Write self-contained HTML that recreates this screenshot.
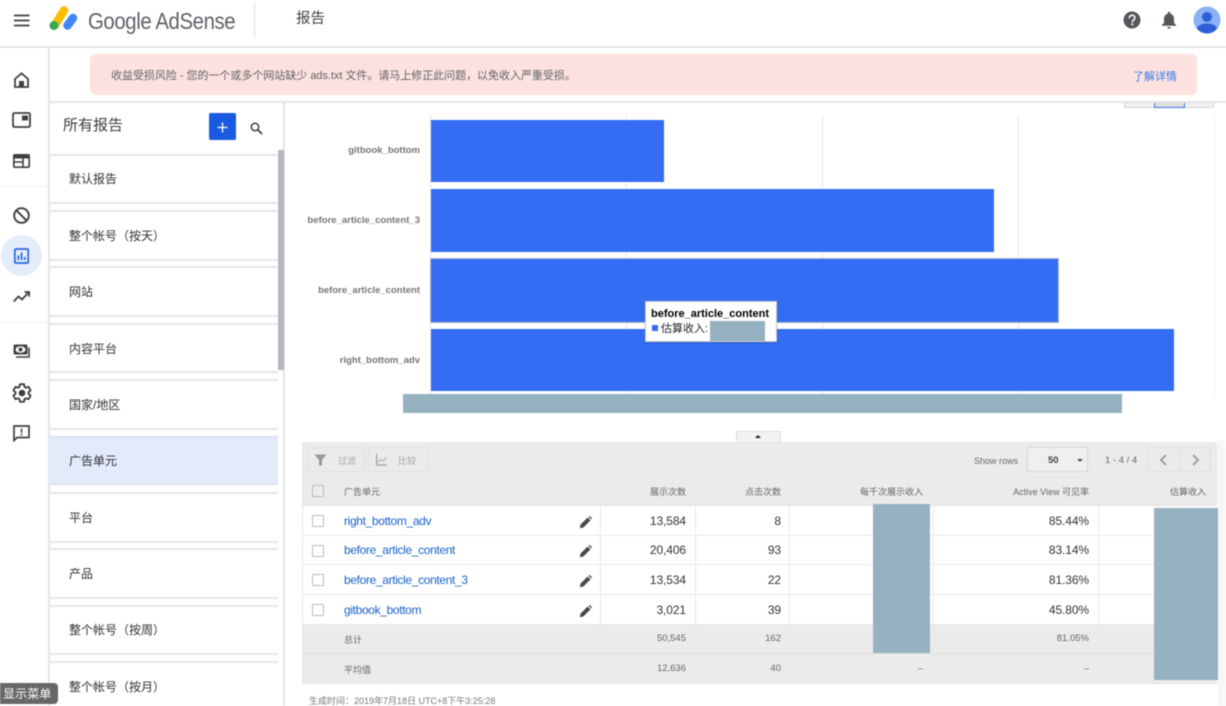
<!DOCTYPE html>
<html><head><meta charset="utf-8"><style>
*{box-sizing:border-box}
html,body{margin:0;padding:0;width:1226px;height:706px;overflow:hidden;background:#fff}
body{font-family:"Liberation Sans","Noto Sans CJK SC",sans-serif;color:#3c4043;position:relative}
#r{position:absolute;left:0;top:0;width:1226px;height:706px;overflow:hidden;filter:blur(.4px)}
#r div,#r svg,#r a{position:absolute}
.t{white-space:nowrap;line-height:20px}
.hl{background:#e3e4e8;height:2px}
.vl{background:#e3e4e8;width:2px}
.side{left:69px;font-size:12px;color:#303235;letter-spacing:0}
.ln{left:49px;width:229px;height:2px;background:#e4e5e9}
.bar{left:431px;background:#346df3}
.gl{width:1px;top:115px;height:280px;background:#e6e6e6}
.mask{background:#96b1bf}
.row{left:303px;width:914px;height:1px;background:#e8e8e8}
.cd{width:1px;top:476px;height:208px;background:#e8e8e8}
.th{font-size:9px;color:#666;top:482px;text-align:right}
.n{font-size:12px;color:#333;text-align:right;letter-spacing:-.1px}
.s{font-size:9.5px;color:#666;text-align:right}
.lnk{left:344px;font-size:12px;color:#1a62c9;letter-spacing:-.35px}
.cb{left:312px;width:12px;height:12px;border:1px solid #bbb;background:#fff;border-radius:1px}
.pen{left:579px;width:13px;height:13px}
.lab{right:806px;font-size:9.5px;font-weight:bold;color:#757575}
.tb{top:451px;font-size:9px}
</style></head><body><div id="r">

<!-- header -->
<div class="hl" style="left:0;top:46px;width:1226px;height:2px;background:#e6e6e8"></div>
<svg style="left:14px;top:14px" width="16" height="13" viewBox="0 0 16 13"><path d="M0 1.5h15.5M0 6.500h15.5M0 11.500h15.5" stroke="#3c4043" stroke-width="1.800" fill="none"/></svg>
<svg style="left:49px;top:5px" width="30" height="26" viewBox="0 0 30 26">
<path d="M6 20 L15 5.500" stroke="#fbbc04" stroke-width="8.500" stroke-linecap="round" fill="none"/>
<path d="M18.500 20.500 L24 13" stroke="#4285f4" stroke-width="8.500" stroke-linecap="round" fill="none"/>
<circle cx="5" cy="20.500" r="4.500" fill="#34a853"/>
</svg>
<div class="t" style="left:88px;top:8px;font-size:23px;line-height:26px;color:#5f6368;letter-spacing:-.45px;transform:scaleX(.885);transform-origin:left center">Google AdSense</div>
<div style="left:254px;top:3px;width:1px;height:34px;background:#dadce0"></div>
<div class="t" style="left:296px;top:9px;font-size:14.500px;color:#3c4043">报告</div>
<svg style="left:1123px;top:11px" width="18" height="18" viewBox="0 0 18 18"><circle cx="9" cy="9" r="8.500" fill="#54575b"/><path d="M6.200 7.200C6.200 5.400 7.500 4.300 9.100 4.300c1.600 0 2.800 1 2.800 2.500 0 2-2.600 2.300-2.600 4.400" fill="none" stroke="#fff" stroke-width="1.600"/><rect x="8.300" y="12.400" width="1.900" height="1.900" fill="#fff"/></svg>
<svg style="left:1161px;top:11px" width="16" height="18" viewBox="0 0 16 18"><path d="M8 .8c.8 0 1.300.6 1.300 1.400v.5c2.400.6 3.700 2.600 3.700 5.100v4.200l2 1.800v.9H1v-.9l2-1.800V7.800c0-2.500 1.300-4.500 3.700-5.100v-.5C6.700 1.400 7.200.8 8 .8z" fill="#54575b"/><path d="M6.300 16h3.400c0 1-.8 1.700-1.700 1.700S6.300 17 6.300 16z" fill="#54575b"/></svg>
<svg style="left:1193px;top:6px" width="28" height="28" viewBox="0 0 28 28"><circle cx="14" cy="14" r="13.500" fill="#8ab0f6"/><circle cx="14" cy="11" r="5" fill="#2f5fd6"/><path d="M3.800 22.500C5.500 18.800 9.500 17.500 14 17.500s8.500 1.300 10.200 5C21.700 25.700 18 27.500 14 27.500S6.300 25.700 3.800 22.500z" fill="#2f5fd6"/></svg>

<!-- left rail -->
<div class="vl" style="left:48px;top:48px;height:658px;background:#e4e5ea"></div>
<svg style="left:14px;top:72px" width="15" height="16" viewBox="0 0 15 16"><path d="M1 7 7.500 1.300 14 7v8H1z" fill="none" stroke="#3c4043" stroke-width="1.800"/><rect x="5" y="9" width="5" height="6" fill="#3c4043"/></svg>
<svg style="left:12px;top:112px" width="19" height="16" viewBox="0 0 19 16"><rect x="1" y="1" width="17" height="14" rx="1.500" fill="none" stroke="#3c4043" stroke-width="1.800"/><rect x="10" y="3.500" width="6" height="5" fill="#3c4043"/></svg>
<svg style="left:13px;top:154px" width="17" height="14" viewBox="0 0 17 14"><rect x=".8" y=".8" width="15.400" height="12.400" rx="1" fill="none" stroke="#3c4043" stroke-width="1.700"/><rect x="1" y="1" width="15" height="3.500" fill="#3c4043"/><path d="M1 8h9M10 4v9" stroke="#3c4043" stroke-width="1.600"/></svg>
<div style="left:0;top:186px;width:48px;height:1px;background:#eeeef0"></div>
<svg style="left:13px;top:207px" width="17" height="17" viewBox="0 0 17 17"><circle cx="8.500" cy="8.500" r="7.300" fill="none" stroke="#3c4043" stroke-width="1.900"/><path d="M3.300 3.300l10.400 10.400" stroke="#3c4043" stroke-width="1.900"/></svg>
<div style="left:1px;top:235px;width:41px;height:41px;border-radius:50%;background:#e3ecfb"></div>
<svg style="left:14px;top:248px" width="15" height="16" viewBox="0 0 15 16"><rect x=".8" y="1" width="13.400" height="14" rx="1" fill="none" stroke="#2a63e0" stroke-width="1.700"/><path d="M4.300 12V7.500M7.500 12V4.500M10.700 12V9" stroke="#2a63e0" stroke-width="1.700"/></svg>
<svg style="left:13px;top:291px" width="17" height="12" viewBox="0 0 17 12"><path d="M.7 10.500 5.500 5.500 9 8.500 15.500 1.500M11.500 1h4.700v4.700" fill="none" stroke="#3c4043" stroke-width="1.800"/></svg>
<div style="left:0;top:322px;width:48px;height:1px;background:#eeeef0"></div>
<svg style="left:13px;top:344px" width="17" height="14" viewBox="0 0 17 14"><rect x=".5" y=".5" width="14" height="10" rx="1.500" fill="#3c4043"/><ellipse cx="7.500" cy="5.500" rx="5" ry="3.300" fill="#fff"/><circle cx="7.500" cy="5.500" r="2" fill="#3c4043"/><path d="M16 3.500v9.500H3" fill="none" stroke="#3c4043" stroke-width="1.600"/></svg>
<svg style="left:10.500px;top:381.500px" width="22" height="22" viewBox="0 0 24 24"><path d="M19.140 12.940c.04-.3.06-.61.06-.94 0-.32-.02-.64-.07-.94l2.030-1.580c.18-.14.23-.41.12-.61l-1.920-3.320c-.12-.22-.37-.29-.59-.22l-2.390.96c-.5-.38-1.030-.7-1.620-.94l-.36-2.540c-.04-.24-.24-.41-.48-.41h-3.840c-.24 0-.43.17-.47.41l-.36 2.540c-.59.24-1.130.57-1.620.94l-2.390-.96c-.22-.08-.47 0-.59.22L2.740 8.870c-.12.21-.08.47.12.61l2.030 1.580c-.05.3-.09.63-.09.94s.02.64.07.94l-2.030 1.580c-.18.14-.23.41-.12.61l1.920 3.320c.12.22.37.29.59.22l2.390-.96c.5.38 1.030.7 1.620.94l.36 2.540c.05.24.24.41.48.41h3.840c.24 0 .44-.17.47-.41l.36-2.540c.59-.24 1.130-.56 1.620-.94l2.390.96c.22.08.47 0 .59-.22l1.920-3.320c.12-.22.07-.47-.12-.61l-2.010-1.580z" fill="none" stroke="#3c4043" stroke-width="2"/><circle cx="12" cy="12" r="3.600" fill="#3c4043"/></svg>
<svg style="left:13px;top:425px" width="17" height="17" viewBox="0 0 17 17"><path d="M1 1h15v11.500H4L1 15.500z" fill="none" stroke="#3c4043" stroke-width="1.700"/><rect x="7.800" y="3.500" width="1.500" height="4.500" fill="#3c4043"/><rect x="7.800" y="9" width="1.500" height="1.500" fill="#3c4043"/></svg>

<!-- alert -->
<div style="left:90px;top:54px;width:1107px;height:41px;background:#fce2de;border-radius:6px"></div>
<div class="t" style="left:111px;top:66px;font-size:11px;color:#5f6368;letter-spacing:-.03px">收益受损风险 - 您的一个或多个网站缺少 ads.txt 文件。请马上修正此问题，以免收入严重受损。</div>
<div class="t" style="left:1133px;top:67px;font-size:11px;color:#3b78e7">了解详情</div>
<div style="left:49px;top:101px;width:1177px;height:2px;background:#e3e4e8"></div>

<!-- reports list -->
<div class="vl" style="left:283px;top:103px;height:603px"></div>
<div class="t" style="left:63px;top:116px;font-size:15px;color:#3c4043">所有报告</div>
<div style="left:209px;top:113px;width:27px;height:27px;background:#1a5ae0;border-radius:2px"></div>
<svg style="left:217px;top:122px" width="11" height="11" viewBox="0 0 11 11"><path d="M5.500 .5v10M.5 5.500h10" stroke="#fff" stroke-width="1.300"/></svg>
<svg style="left:250px;top:122px" width="13" height="13" viewBox="0 0 13 13"><circle cx="5" cy="5" r="3.700" fill="none" stroke="#3c4043" stroke-width="1.500"/><path d="M8 8l4 4" stroke="#3c4043" stroke-width="1.800"/></svg>
<div style="left:278px;top:150px;width:6px;height:220px;background:#b3b7bd"></div>

<div class="ln" style="top:154px"></div>
<div class="ln" style="top:202px"></div><div class="ln" style="top:210px"></div>
<div class="ln" style="top:259px"></div><div class="ln" style="top:266px"></div>
<div class="ln" style="top:315px"></div><div class="ln" style="top:323px"></div>
<div class="ln" style="top:371px"></div><div class="ln" style="top:379px"></div>
<div class="ln" style="top:428px"></div>
<div style="left:49px;top:436px;width:229px;height:49px;background:#e3ebfb;border-top:1px solid #d5dbe8;border-bottom:1px solid #d5dbe8"></div>
<div class="ln" style="top:492px"></div>
<div class="ln" style="top:541px"></div><div class="ln" style="top:548px"></div>
<div class="ln" style="top:597px"></div><div class="ln" style="top:605px"></div>
<div class="ln" style="top:653px"></div><div class="ln" style="top:661px"></div>

<div class="t side" style="top:169px">默认报告</div>
<div class="t side" style="top:226px">整个帐号（按天）</div>
<div class="t side" style="top:282px">网站</div>
<div class="t side" style="top:339px">内容平台</div>
<div class="t side" style="top:395px">国家/地区</div>
<div class="t side" style="top:451px">广告单元</div>
<div class="t side" style="top:508px">平台</div>
<div class="t side" style="top:564px">产品</div>
<div class="t side" style="top:620px">整个帐号（按周）</div>
<div class="t side" style="top:677px">整个帐号（按月）</div>

<div style="left:0;top:683px;width:58px;height:21px;background:#666769;border-radius:0 4px 4px 0"></div>
<div class="t" style="left:3px;top:684px;font-size:12px;line-height:21px;color:#fff;letter-spacing:.1px">显示菜单</div>

<!-- chart toggle remnants -->
<div style="left:1124px;top:103px;width:90px;height:5px;background:#f1f1f1;border:1px solid #d8d8d8;border-top:0"></div>
<div style="left:1154px;top:103px;width:31px;height:5px;background:#dedede;border:1px solid #3b78e7;border-top:0"></div>

<!-- chart -->
<div class="gl" style="left:430px"></div><div class="gl" style="left:626px"></div><div class="gl" style="left:822px"></div><div class="gl" style="left:1018px"></div><div class="gl" style="left:1214px;background:#f0f0f0"></div>
<div class="bar" style="top:120px;width:233px;height:62px"></div>
<div class="bar" style="top:189px;width:563px;height:63px"></div>
<div style="left:430px;top:258px;width:629px;height:65px;background:#346df3;border:1px solid #b4b8c0"></div>
<div class="bar" style="top:329px;width:743px;height:62px"></div>
<div class="t lab" style="top:141px">gitbook_bottom</div>
<div class="t lab" style="top:211px">before_article_content_3</div>
<div class="t lab" style="top:281px">before_article_content</div>
<div class="t lab" style="top:351px">right_bottom_adv</div>
<div style="left:645px;top:301px;width:132px;height:41px;background:#fff;border:1px solid #ccc;box-shadow:0 1px 2px rgba(0,0,0,.2)"></div>
<div class="t" style="left:651px;top:304px;font-size:11px;font-weight:bold;color:#000">before_article_content</div>
<div style="left:652px;top:325px;width:6px;height:6px;background:#346df3"></div>
<div class="t" style="left:661px;top:319px;font-size:11px;color:#222">估算收入:</div>
<div class="mask" style="left:710px;top:321px;width:55px;height:20px"></div>
<div class="mask" style="left:403px;top:394px;width:719px;height:19px"></div>

<!-- table -->
<div style="left:736px;top:431px;width:45px;height:12px;background:#f3f3f3;border:1px solid #dcdcdc;border-bottom:0"></div>
<div style="left:755px;top:435px;width:0;height:0;border-left:3.500px solid transparent;border-right:3.500px solid transparent;border-bottom:3.500px solid #222"></div>
<div style="left:302px;top:442px;width:915px;height:242px;background:#ebebeb;border:1px solid #e6e6e6"></div>
<div style="left:303px;top:505px;width:914px;height:119px;background:#fff"></div>
<div style="left:303px;top:476px;width:914px;height:1px;background:#e4e4e4"></div>
<div style="left:303px;top:505px;width:914px;height:1px;background:#e0e0e0"></div>
<div class="row" style="top:535px"></div><div class="row" style="top:564px"></div><div class="row" style="top:594px"></div>
<div class="row" style="top:653px;background:#dcdcdc"></div>
<div class="cd" style="left:600px"></div><div class="cd" style="left:695px"></div><div class="cd" style="left:789px"></div><div class="cd" style="left:933px"></div><div class="cd" style="left:1098px"></div>

<div style="left:307px;top:447px;width:58px;height:25px;border:1px solid #e0e0e0;border-radius:2px"></div>
<div style="left:368px;top:447px;width:61px;height:25px;border:1px solid #e0e0e0;border-radius:2px"></div>
<svg style="left:314px;top:454px" width="13" height="12" viewBox="0 0 13 12"><path d="M.5 .5h12L8 6v5.500H5V6z" fill="#999"/></svg>
<svg style="left:376px;top:454px" width="11" height="12" viewBox="0 0 11 12"><path d="M.8 0v11h10" fill="none" stroke="#aaa" stroke-width="1.500"/><path d="M2.500 8 5 5.500 7 7l3.500-3.500" fill="none" stroke="#aaa" stroke-width="1"/></svg>
<div class="t tb" style="left:338px;color:#a5a5a5">过滤</div>
<div class="t tb" style="left:398px;color:#a5a5a5">比较</div>
<div class="t tb" style="left:974px;color:#666">Show rows</div>
<div style="left:1027px;top:447px;width:61px;height:25px;background:#efefef;border:1px solid #d6d6d6;border-radius:2px"></div>
<div class="t tb" style="left:1048px;font-weight:bold;color:#444;font-size:9.500px">50</div>
<div style="left:1077px;top:459px;width:0;height:0;border-left:3px solid transparent;border-right:3px solid transparent;border-top:3px solid #555"></div>
<div class="t tb" style="left:1105px;color:#666;font-size:9.500px">1 - 4 / 4</div>
<div style="left:1147px;top:447px;width:64px;height:25px;border:1px solid #e0e0e0;border-radius:2px"></div>
<div style="left:1179px;top:447px;width:1px;height:25px;background:#e0e0e0"></div>
<svg style="left:1159px;top:454px" width="9" height="12" viewBox="0 0 9 12"><path d="M7 1 2 6l5 5" fill="none" stroke="#999" stroke-width="1.800"/></svg>
<svg style="left:1191px;top:454px" width="9" height="12" viewBox="0 0 9 12"><path d="M2 1l5 5-5 5" fill="none" stroke="#999" stroke-width="1.800"/></svg>

<div class="cb" style="top:485px;background:#ececec"></div>
<div class="cb" style="top:515px"></div><div class="cb" style="top:545px"></div><div class="cb" style="top:574px"></div><div class="cb" style="top:604px"></div>

<div class="t th" style="left:344px;text-align:left">广告单元</div>
<div class="t th" style="right:540px">展示次数</div>
<div class="t th" style="right:445px">点击次数</div>
<div class="t th" style="right:303px">每千次展示收入</div>
<div class="t th" style="right:137px">Active View 可见率</div>
<div class="t th" style="right:20px">估算收入</div>

<div class="t lnk" style="top:511px">right_bottom_adv</div>
<div class="t lnk" style="top:540px">before_article_content</div>
<div class="t lnk" style="top:570px">before_article_content_3</div>
<div class="t lnk" style="top:600px">gitbook_bottom</div>

<svg class="pen" style="top:516px" viewBox="0 0 13 13"><path d="M.8 12.200 1.500 8.600 8.600 1.500l2.900 2.900-7.100 7.100zM9.500.7l.6-.4c.3-.2.6-.2.9 0l1.700 1.700c.2.3.2.600 0 .9l-.4.6z" fill="#4a4a4a"/></svg>
<svg class="pen" style="top:545px" viewBox="0 0 13 13"><path d="M.8 12.200 1.500 8.600 8.600 1.500l2.900 2.900-7.100 7.100zM9.500.7l.6-.4c.3-.2.6-.2.9 0l1.700 1.700c.2.3.2.600 0 .9l-.4.6z" fill="#4a4a4a"/></svg>
<svg class="pen" style="top:575px" viewBox="0 0 13 13"><path d="M.8 12.200 1.500 8.600 8.600 1.500l2.900 2.900-7.100 7.100zM9.500.7l.6-.4c.3-.2.6-.2.9 0l1.700 1.700c.2.3.2.600 0 .9l-.4.6z" fill="#4a4a4a"/></svg>
<svg class="pen" style="top:605px" viewBox="0 0 13 13"><path d="M.8 12.200 1.500 8.600 8.600 1.500l2.900 2.900-7.100 7.100zM9.500.7l.6-.4c.3-.2.6-.2.9 0l1.700 1.700c.2.3.2.600 0 .9l-.4.6z" fill="#4a4a4a"/></svg>

<div class="t n" style="right:540px;top:511px">13,584</div>
<div class="t n" style="right:445px;top:511px">8</div>
<div class="t n" style="right:137px;top:511px">85.44%</div>
<div class="t n" style="right:540px;top:540px">20,406</div>
<div class="t n" style="right:445px;top:540px">93</div>
<div class="t n" style="right:137px;top:540px">83.14%</div>
<div class="t n" style="right:540px;top:570px">13,534</div>
<div class="t n" style="right:445px;top:570px">22</div>
<div class="t n" style="right:137px;top:570px">81.36%</div>
<div class="t n" style="right:540px;top:600px">3,021</div>
<div class="t n" style="right:445px;top:600px">39</div>
<div class="t n" style="right:137px;top:600px">45.80%</div>

<div class="t s" style="left:344px;top:630px;text-align:left;font-size:9px">总计</div>
<div class="t s" style="left:344px;top:660px;text-align:left;font-size:9px">平均值</div>
<div class="t s" style="right:540px;top:629px">50,545</div>
<div class="t s" style="right:445px;top:629px">162</div>
<div class="t s" style="right:137px;top:629px">81.05%</div>
<div class="t s" style="right:540px;top:659px">12,636</div>
<div class="t s" style="right:445px;top:659px">40</div>
<div class="t s" style="right:303px;top:659px">–</div>
<div class="t s" style="right:137px;top:659px">–</div>

<div class="mask" style="left:873px;top:504px;width:57px;height:149px"></div>
<div class="mask" style="left:1154px;top:508px;width:64px;height:172px"></div>
<div style="left:1218px;top:440px;width:8px;height:266px;background:linear-gradient(90deg,#f4f4f4,#fafafa)"></div>

<div class="t" style="left:309px;top:691px;font-size:9px;color:#777">生成时间：2019年7月18日 UTC+8下午3:25:28</div>
</div></body></html>
